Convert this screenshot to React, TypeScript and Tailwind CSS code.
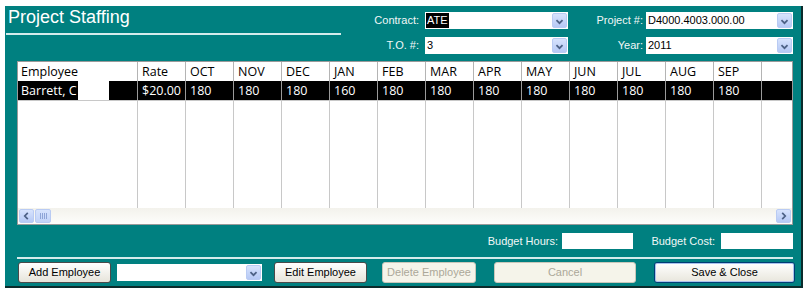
import React from 'react';

const months = ['OCT', 'NOV', 'DEC', 'JAN', 'FEB', 'MAR', 'APR', 'MAY', 'JUN', 'JUL', 'AUG', 'SEP'];
const hours = ['180', '180', '180', '160', '180', '180', '180', '180', '180', '180', '180', '180'];

const Chevron: React.FC<{ dir?: 'down' | 'left' | 'right' }> = ({ dir = 'down' }) => {
  const pts = dir === 'down' ? '4,6 7.5,9.5 11,6' : dir === 'left' ? '9,3.5 5.5,7 9,10.5' : '6,3.5 9.5,7 6,10.5';
  return (
    <svg width="15" height="14" viewBox="0 0 15 14" className="block">
      <polyline points={pts} fill="none" stroke="#4d6185" strokeWidth="2" />
    </svg>
  );
};

const DropBtn = () => (
  <div className="w-[15px] h-[15px] mr-[1px] rounded-[2px] border border-[#b9cbf3] bg-linear-to-b from-[#d7e3fd] to-[#b6c9f5] flex items-center justify-center">
    <Chevron />
  </div>
);

const Combo: React.FC<{ w: string; value?: string; selected?: boolean }> = ({ w, value, selected }) => (
  <div className={`${w} h-[17px] bg-white flex items-center justify-between`}>
    <span className={`ml-[1px] px-[1px] text-[11px] leading-[15px] ${selected ? 'bg-black text-white' : 'text-black'}`}>
      {value}
    </span>
    <DropBtn />
  </div>
);

const Btn: React.FC<{ w: string; ml: string; label: string; disabled?: boolean; primary?: boolean }> = ({ w, ml, label, disabled, primary }) => (
  <div
    className={`${w} ${ml} h-[21px] rounded-[3px] border flex items-center justify-center text-[11px] ${
      disabled
        ? 'border-[#c9c7ba] bg-[#f5f4ea] text-[#aca899]'
        : primary
        ? 'border-[#003c74] bg-linear-to-b from-white to-[#e8e6dc] text-black shadow-[inset_0_0_0_1px_#a8c2ee]'
        : 'border-[#4a4a4a] bg-linear-to-b from-white to-[#e6e4da] text-black'
    }`}
  >
    {label}
  </div>
);

export default function App() {
  return (
    <div className="w-[805px] h-[296px] bg-white pt-[6px] pl-[5px] font-['Liberation_Sans',Arial,sans-serif]">
      <div className="w-[798px] h-[282px] bg-[#008080] border-r-2 border-b-2 border-[#0b2b2b] flex flex-col">
        {/* header */}
        <div className="h-[55px] flex">
          <div className="w-[336px] flex flex-col">
            <div className="h-[27px] pl-[3px] text-[18px] leading-[22px] text-white">Project Staffing</div>
            <div className="ml-[1px] w-[335px] h-[2px] bg-[#d4ebeb]" />
          </div>
          <div className="pt-[6px] flex flex-col gap-[8px] text-[11px] text-[#f2f7f7]">
            <div className="flex items-center h-[17px]">
              <div className="w-[84px] text-right pr-[6px]">Contract:</div>
              <Combo w="w-[143px]" value="ATE" selected />
              <div className="w-[78px] text-right pr-[3px]">Project #:</div>
              <Combo w="w-[147px]" value="D4000.4003.000.00" />
            </div>
            <div className="flex items-center h-[17px]">
              <div className="w-[84px] text-right pr-[6px]">T.O. #:</div>
              <Combo w="w-[143px]" value="3" />
              <div className="w-[78px] text-right pr-[3px]">Year:</div>
              <Combo w="w-[147px]" value="2011" />
            </div>
          </div>
        </div>

        {/* grid */}
        <div className="ml-[12px] w-[776px] h-[164px] border border-[#9a9a9a] bg-white flex flex-col font-['Open_Sans',sans-serif] text-[12.5px]">
          <div className="h-[19px] flex leading-[19px] text-black">
            <div className="w-[120px] border-r border-[#b4b4b4] pl-[3px]">Employee</div>
            <div className="w-[48px] border-r border-[#b4b4b4] pl-[4px]">Rate</div>
            {months.map((m) => (
              <div key={m} className="w-[48px] border-r border-[#b4b4b4] pl-[4px]">{m}</div>
            ))}
            <div className="flex-1" />
          </div>
          <div className="h-[20px] flex leading-[19px] bg-black text-white border-b border-[#c8c8c8]">
            <div className="w-[120px] border-r border-[#9a9a9a] pl-[3px] flex">
              <span>Barrett, C</span>
              <span className="ml-[1px] w-[31px] h-[19px] bg-white" />
            </div>
            <div className="w-[48px] border-r border-[#9a9a9a] pl-[4px]">$20.00</div>
            {hours.map((h, i) => (
              <div key={i} className="w-[48px] border-r border-[#9a9a9a] pl-[4px]">{h}</div>
            ))}
            <div className="flex-1" />
          </div>
          <div className="flex-1 flex">
            <div className="w-[120px] border-r border-[#c8c8c8]" />
            <div className="w-[48px] border-r border-[#c8c8c8]" />
            {months.map((m) => (
              <div key={m} className="w-[48px] border-r border-[#c8c8c8]" />
            ))}
            <div className="flex-1" />
          </div>
          <div className="h-[16px] bg-linear-to-b from-[#f3f2ec] to-[#fdfdfb] flex items-center px-[1px]">
            <div className="w-[15px] h-[14px] rounded-[2px] border border-[#b9cbf3] bg-linear-to-b from-[#d7e3fd] to-[#b6c9f5] flex items-center justify-center">
              <Chevron dir="left" />
            </div>
            <div className="ml-[1px] w-[16px] h-[14px] rounded-[2px] border border-[#b9cbf3] bg-linear-to-b from-[#d7e3fd] to-[#c2d3f8] flex items-center justify-center gap-[1px]">
              {[0, 1, 2, 3].map((i) => (
                <div key={i} className="w-[1px] h-[6px] bg-[#8ea4d6]" />
              ))}
            </div>
            <div className="flex-1" />
            <div className="w-[15px] h-[14px] rounded-[2px] border border-[#b9cbf3] bg-linear-to-b from-[#d7e3fd] to-[#b6c9f5] flex items-center justify-center">
              <Chevron dir="right" />
            </div>
          </div>
        </div>

        {/* budget */}
        <div className="mt-[8px] h-[16px] flex items-center justify-end pr-[8px] text-[11px] text-[#f2f7f7]">
          <div className="pr-[4px]">Budget Hours:</div>
          <div className="w-[71px] h-[16px] bg-white" />
          <div className="w-[88px] text-right pr-[6px]">Budget Cost:</div>
          <div className="w-[72px] h-[16px] bg-white" />
        </div>

        <div className="mt-[8px] ml-[12px] w-[776px] h-[2px] bg-[#d4ebeb]" />

        {/* buttons */}
        <div className="mt-[3px] h-[21px] flex items-center">
          <Btn w="w-[93px]" ml="ml-[13px]" label="Add Employee" />
          <div className="ml-[6px]">
            <Combo w="w-[145px]" />
          </div>
          <Btn w="w-[93px]" ml="ml-[12px]" label="Edit Employee" />
          <Btn w="w-[94px]" ml="ml-[15px]" label="Delete Employee" disabled />
          <Btn w="w-[142px]" ml="ml-[18px]" label="Cancel" disabled />
          <Btn w="w-[141px]" ml="ml-[18px]" label="Save & Close" primary />
        </div>
      </div>
    </div>
  );
}
